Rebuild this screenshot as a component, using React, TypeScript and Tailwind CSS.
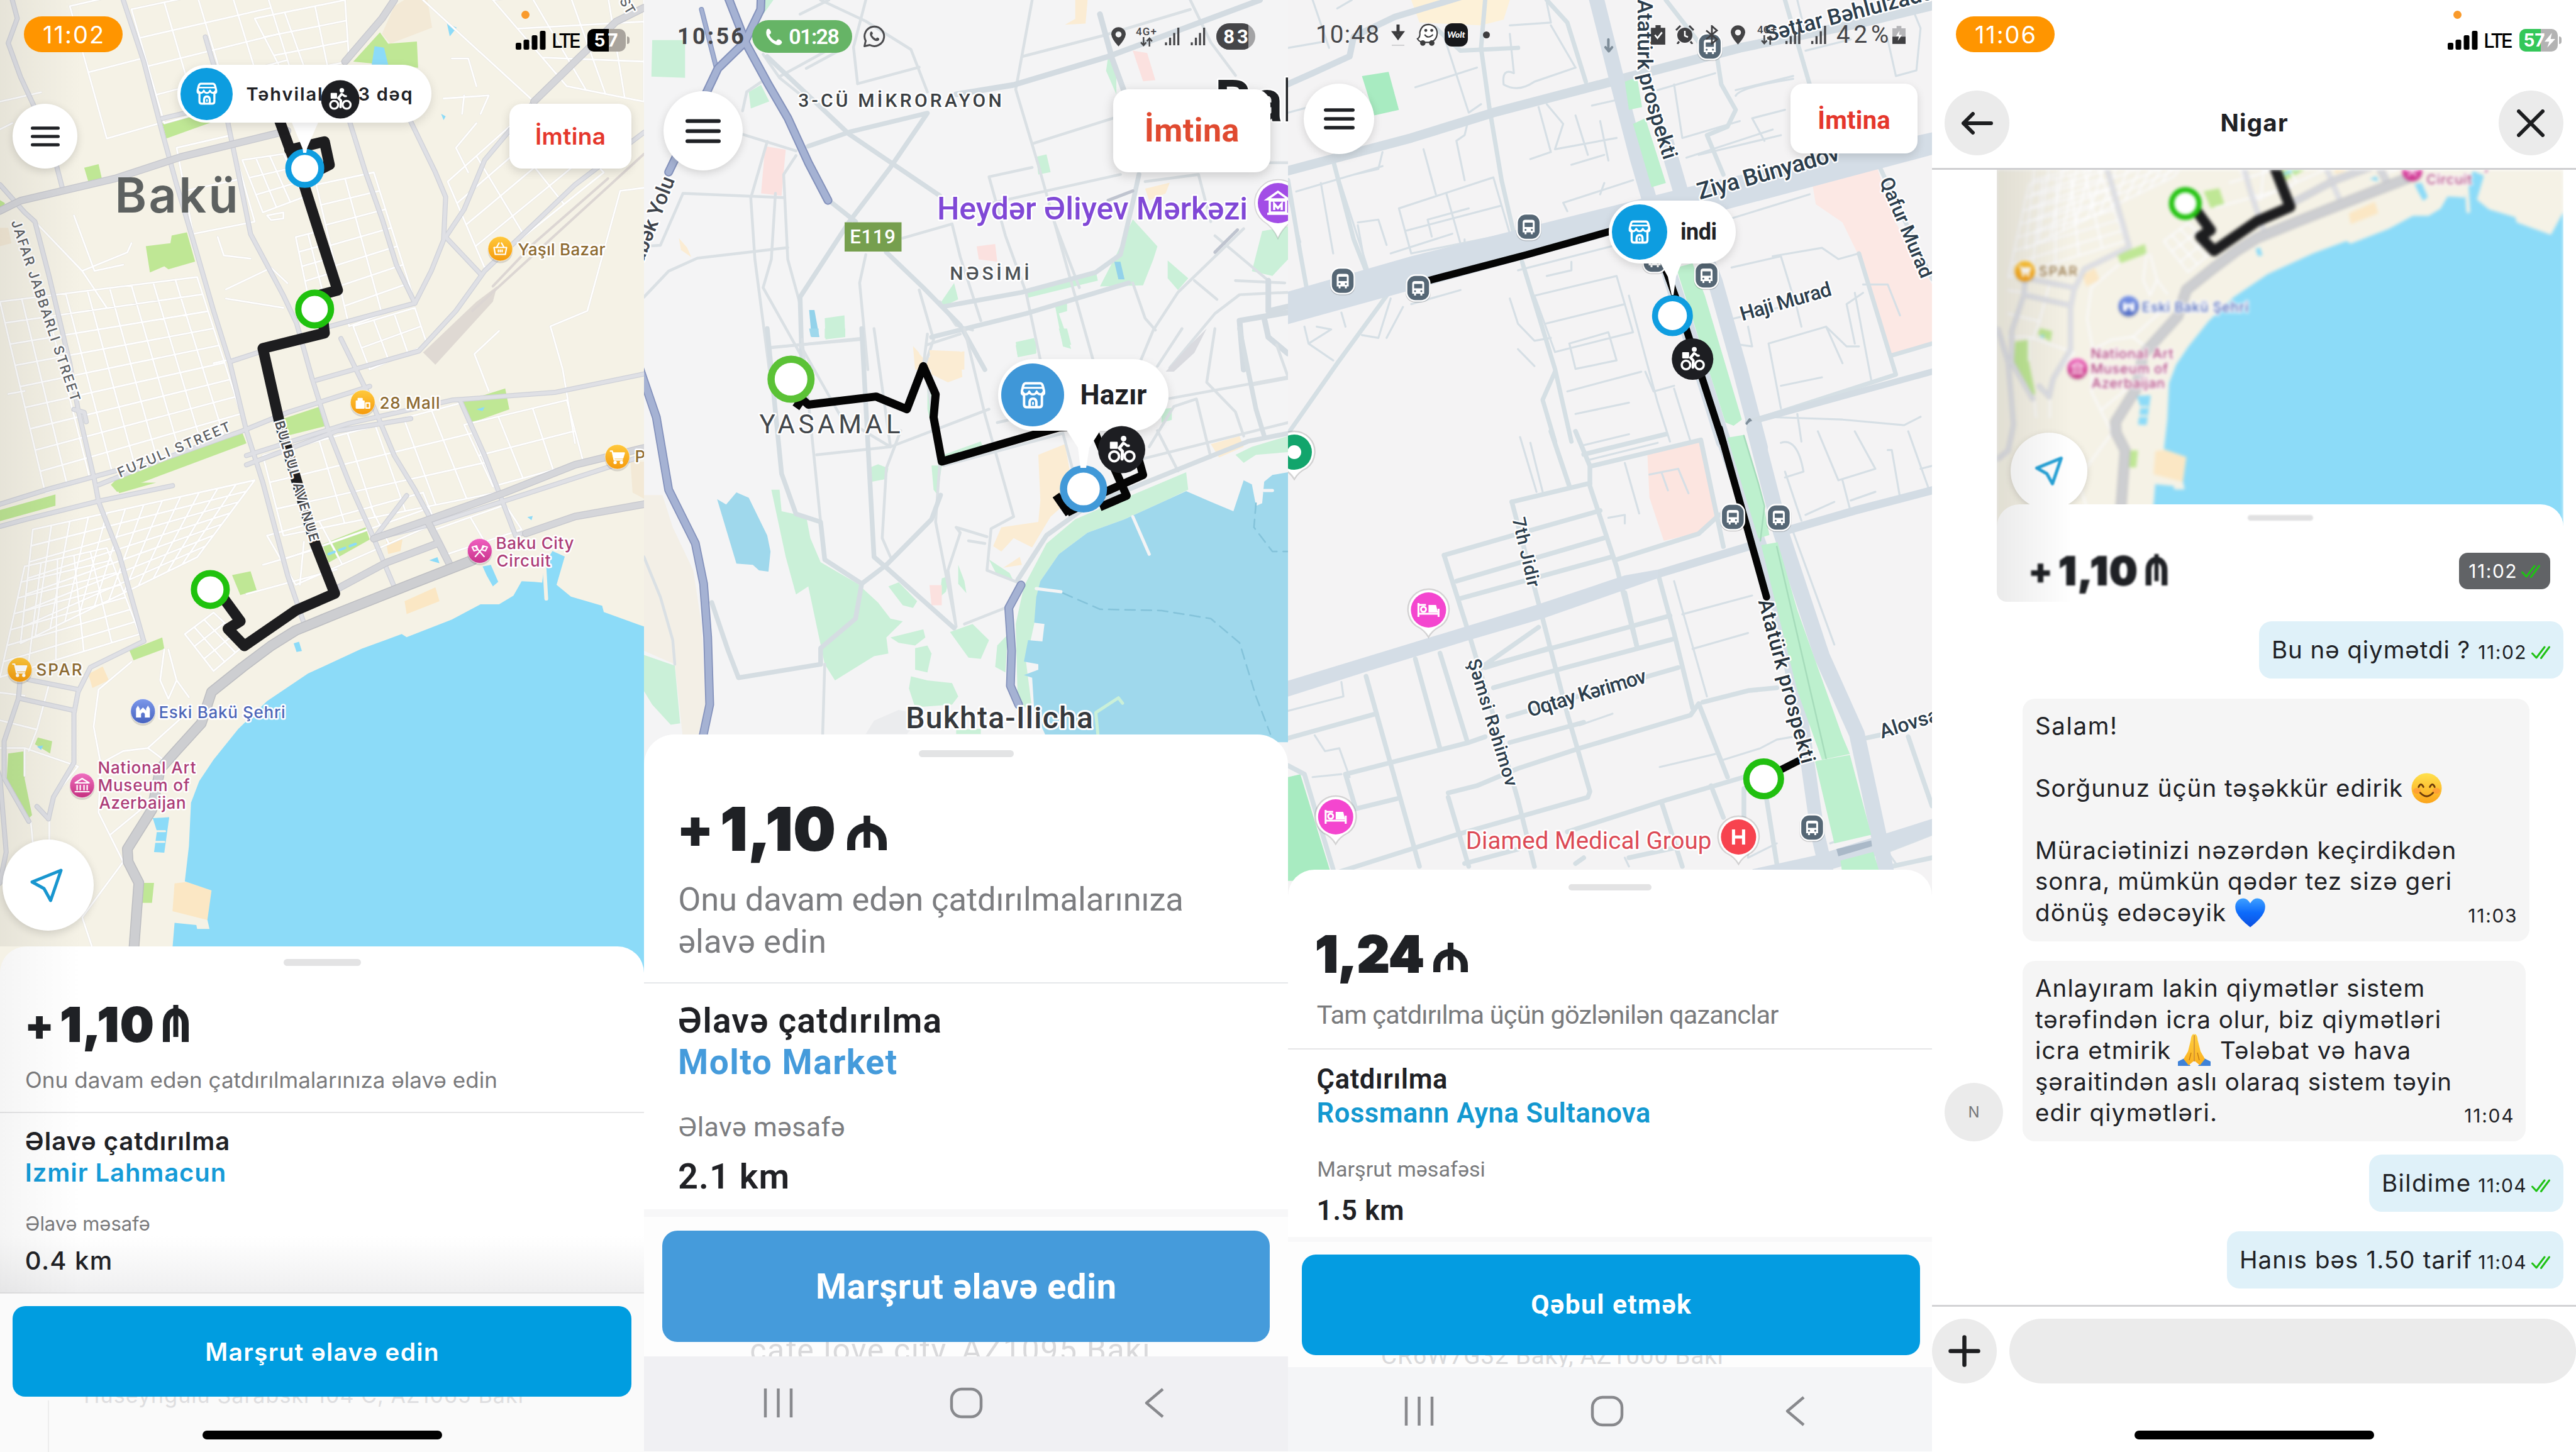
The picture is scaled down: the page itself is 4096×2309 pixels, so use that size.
import { useLayoutEffect, useRef, useState, type ReactNode } from "react";

/* ---------- text helpers ---------- */

/** A single line of text tracked so that its ink fills the given width. */
function Fit({ w, className = "", children }: { w: number; className?: string; children: string }) {
  const ref = useRef<HTMLSpanElement>(null);
  const [fit, setFit] = useState({ tracking: 0, bearing: 0 });
  useLayoutEffect(() => {
    const el = ref.current;
    if (!el) return;
    el.style.letterSpacing = "0px";
    const natural = el.getBoundingClientRect().width;
    const bearing = parseFloat(getComputedStyle(el).fontSize) * 0.055;
    const tracking = (w + bearing * 2 - natural) / Math.max(1, children.length - 1);
    el.style.letterSpacing = `${tracking}px`;
    setFit({ tracking, bearing });
  }, [w, children]);
  return (
    <span className={`inline-block leading-none ${className}`}>
      <span
        ref={ref}
        className="inline-block whitespace-pre"
        style={{ letterSpacing: fit.tracking, marginLeft: -fit.bearing, marginRight: -fit.tracking - fit.bearing }}
      >
        {children}
      </span>
    </span>
  );
}

type LabelProps = {
  x: number;
  y: number;
  w?: number;
  size: number;
  fill: string;
  rot?: number;
  weight?: number;
  halo?: string;
  haloWidth?: number;
  roboto?: boolean;
  anchor?: "start" | "end";
  children: string;
};

function Label({ x, y, w, size, fill, rot = 0, weight = 500, halo = "#ffffff", haloWidth = 5, roboto, anchor = "start", children }: LabelProps) {
  const bearing = size * 0.06;
  return (
    <text
      x={-bearing}
      y={0}
      transform={`translate(${x} ${y}) rotate(${rot})`}
      textLength={w ? w + bearing * 2 : undefined}
      lengthAdjust="spacing"
      fontSize={size}
      fontWeight={weight}
      fill={fill}
      stroke={halo}
      strokeWidth={haloWidth}
      strokeLinejoin="round"
      paintOrder="stroke"
      textAnchor={anchor}
      className={roboto ? "font-['Roboto',sans-serif]" : "font-['Inter',sans-serif] [font-optical-sizing:none]"}
    >
      {children}
    </text>
  );
}

/* ---------- map drawing helpers ---------- */

type Pt = [number, number];

/** Street grid inside a quadrilateral (corners clockwise from top left). */
function mesh(q: [Pt, Pt, Pt, Pt], rows: number, cols: number) {
  const mix = (a: Pt, b: Pt, t: number): Pt => [a[0] + (b[0] - a[0]) * t, a[1] + (b[1] - a[1]) * t];
  const seg = (a: Pt, b: Pt) => `M${a[0].toFixed(0)} ${a[1].toFixed(0)}L${b[0].toFixed(0)} ${b[1].toFixed(0)}`;
  const out: string[] = [];
  for (let i = 0; i <= rows; i++) out.push(seg(mix(q[0], q[3], i / rows), mix(q[1], q[2], i / rows)));
  for (let i = 0; i <= cols; i++) out.push(seg(mix(q[0], q[1], i / cols), mix(q[3], q[2], i / cols)));
  return out.join("");
}

function Tile({ top, sy, children }: { top: number; sy: number; children: ReactNode }) {
  return (
    <g
      transform={`translate(0 ${top}) scale(0.6531 ${sy})`}
      fill="none"
      strokeLinecap="round"
      strokeLinejoin="round"
      className="[&_path]:[vector-effect:non-scaling-stroke] [&_polyline]:[vector-effect:non-scaling-stroke]"
    >
      {children}
    </g>
  );
}

function Lines({ list, c, w, dash }: { list: string[]; c: string; w: number; dash?: string }) {
  return (
    <g stroke={c} strokeWidth={w} strokeDasharray={dash}>
      {list.map((p) => (
        <polyline key={p} points={p} />
      ))}
    </g>
  );
}

function Areas({ list, c }: { list: string[]; c: string }) {
  return (
    <g fill={c}>
      {list.map((p) => (
        <polygon key={p} points={p} />
      ))}
    </g>
  );
}

function Ring({ x, y, r, sw, c }: { x: number; y: number; r: number; sw: number; c: string }) {
  return <circle cx={x} cy={y} r={r - sw / 2} fill="#fff" stroke={c} strokeWidth={sw} />;
}

function Bike({ x, y, r }: { x: number; y: number; r: number }) {
  return (
    <g transform={`translate(${x} ${y}) scale(${r / 30})`}>
      <circle r="30" fill="#1d1e22" />
      <g fill="none" stroke="#fff" strokeWidth="3.2" strokeLinecap="round" strokeLinejoin="round">
        <circle cx="-9.5" cy="8.5" r="6.2" />
        <circle cx="10" cy="8.5" r="6.2" />
        <path d="M2 -8 L-3 -2 L1 2 L0.5 12" strokeWidth="4" />
        <path d="M3 -8 L7 -5 L9 -5" />
      </g>
      <rect x="-15" y="-10" width="10" height="9" rx="1" fill="#fff" />
      <circle cx="2.5" cy="-14" r="3.6" fill="#fff" />
    </g>
  );
}

function StoreIcon({ className }: { className: string }) {
  return (
    <svg viewBox="0 0 40 44" className={className} fill="none" stroke="#fff" strokeWidth="4" strokeLinejoin="round" strokeLinecap="round">
      <path d="M8 2.500H32Q35 3 36 7L38 15V19Q37 21 34.500 21V37Q34.500 41.500 30 41.500H10Q5.500 41.500 5.500 37V21Q3 21 2 19V15L4 7Q5 3 8 2.500Z" />
      <path d="M5 10H35" strokeWidth="3" />
      <path d="M2.500 15.500Q5 21 9 20.500Q12.500 20 14 16Q16 21 20 20.500Q24 21 26 16Q27.500 20 31 20.500Q35 21 37.500 15.500" strokeWidth="3.500" />
      <path d="M14.500 41V33Q15 27.500 20 27.500Q25 27.500 25.500 33V41" />
      <path d="M20 34V36.500" strokeWidth="3" />
    </svg>
  );
}

/** Round map badge used for places of interest. */
function Poi({ x, y, from, to, id, children }: { x: number; y: number; from: string; to: string; id: string; children: ReactNode }) {
  return (
    <g transform={`translate(${x} ${y})`}>
      <defs>
        <linearGradient id={id} x1="0" y1="0" x2="0" y2="1">
          <stop offset="0" stopColor={from} />
          <stop offset="1" stopColor={to} />
        </linearGradient>
      </defs>
      <ellipse cx="0" cy="3" rx="20" ry="20" fill="#000" opacity="0.12" />
      <circle r="19.500" fill={`url(#${id})`} stroke="#fff" strokeOpacity="0.6" strokeWidth="1" />
      <g fill="none" stroke="#fff" strokeWidth="2.200" strokeLinecap="round" strokeLinejoin="round">
        {children}
      </g>
    </g>
  );
}

const Cart = () => (
  <>
    <path d="M-11 -9H-8L-5 5H8" />
    <path d="M-7 -6H11L8.500 2H-5Z" fill="#fff" />
    <circle cx="-3.500" cy="9" r="1.600" fill="#fff" />
    <circle cx="6.500" cy="9" r="1.600" fill="#fff" />
  </>
);

/* ---------- first map ---------- */

const land1 = {
  park: [
    "860,200 925,105 945,142 1015,135 1018,220",
    "395,400 500,370 520,395 405,450",
    "205,545 240,533 248,580 215,590",
    "355,800 415,790 418,765 455,755 475,850 410,875 400,865 365,885",
    "1128,1305 1230,1262 1240,1330 1145,1375",
    "690,1360 780,1320 790,1385 700,1415",
    "270,1575 300,1535 590,1405 600,1440 420,1530 285,1598",
    "0,650 12,660 8,675 0,678",
    "785,1768 890,1713 900,1753 800,1828",
    "565,1868 610,1856 625,1918 585,1933",
    "315,2113 395,2071 400,2108 325,2145",
    "-30,1670 0,1657 135,1606 135,1643 0,1693 -30,1702",
    "280,1568 380,1568 290,1602",
    "20,2448 62,2440 60,2530 78,2648 65,2665 40,2610 16,2540",
    "85,2418 92,2396 127,2408 122,2448",
    "345,2868 375,2868 370,2933 343,2933",
  ],
  sand: ["985,1953 1060,1908 1070,1953 990,1995", "425,2870 455,2865 515,2893 508,2990 420,2960", "215,2190 250,2165 265,2210 225,2235", "940,1760 980,1752 975,1790 945,1800"],
  water: [
    "905,210 912,150 935,155 945,210",
    "1088,75 1112,90 1095,118",
    "1045,1820 1065,1810 1070,1830",
    "1175,1840 1195,1835 1213,1890 1200,1905 1185,1870",
    "715,2090 728,2085 735,2115 722,2118",
    "372,2658 412,2655 400,2770 375,2768 382,2700",
    "1074,370 1085,378 1080,390",
    "1284,1680 1297,1676 1294,1690",
    "1160,1330 1180,1322 1175,1335",
    "90,2425 105,2422 100,2436",
  ],
};

const sea1 =
  "1640,1890 1605,1948 1569,2036 1470,1988 1466,1968 1390,1938 1355,1900 1375,1808 1345,1790 1325,1835 1320,1893 1300,1890 1270,1888 1250,1935 1215,1963 1170,1963 1100,2013 990,2070 978,2060 880,2108 750,2188 650,2278 580,2368 520,2468 485,2538 465,2608 460,2748 450,2863 515,2893 505,2988 510,3018 480,3018 478,3005 425,2998 415,3160 1640,3160";

const main1 = [
  "30,0 42,60 20,140 50,250 95,380 130,500 152,612",
  "300,0 350,200 395,430 430,600 470,780 520,1010 560,1180 600,1400 640,1568 672,1728 700,1868 742,2033",
  "500,120 540,300 555,400 580,560 610,760 690,960 722,1050 760,1230 800,1400 850,1568 900,1718 962,1913",
  "0,600 60,690 85,720 120,900 170,1180 190,1330 230,1560 240,1630 290,1800 350,2083",
  "395,385 520,345 640,300",
  "850,390 890,560 930,710 965,860 1010,985",
  "1000,395 1060,560 1085,640 1080,780 1050,880 1010,985 790,1065",
  "770,1235 1020,1140 1110,1010 1180,880 1400,600 1568,430",
  "1300,330 1180,520 1130,680 1085,770 1170,890",
  "560,1175 640,1140",
  "240,1575 400,1490 590,1400 700,1340 900,1255",
  "600,1480 850,1375 1100,1300 1350,1275 1568,1215",
  "1120,1300 1180,1480 1215,1600 1255,1740 1280,1730",
  "830,1100 900,1290 960,1480 1010,1590 1050,1690",
  "600,1510 820,1400 1000,1360",
  "0,1710 60,1688 240,1628 420,1578",
  "0,1638 120,1588 280,1530",
  "350,2083 220,2168 190,2248 180,2318 180,2478 130,2590 118,2660",
  "50,2190 45,2268 10,2408 10,2528 70,2668",
  "45,2268 180,2308",
  "70,2208 190,2240",
  "-30,2400 0,2528 15,2768 0,2868 -30,2900",
  "90,2620 118,2660",
  "990,1610 910,1750 1060,1700 1568,1480",
  "180,1330 205,1340 210,1370",
];

const wide1 = [
  "-30,700 0,685 50,652 280,580 440,510 700,425",
  "960,0 930,60 840,200",
  "1568,25 1500,70 1300,330",
  "1630,1460 1568,1455 1400,1510 1230,1600 1040,1690 910,1750",
  "1640,1610 1568,1638 1400,1678 1280,1733",
  "1040,1690 1070,1768 1097,1840",
  "1060,1768 940,1828 825,1910",
];

const coast1 = ["1150,1820 1000,1898 830,1988 720,2048 660,2098 590,2168 515,2248 490,2350 430,2438 390,2498 370,2630 310,2758 312,2800 338,2868 325,3100"];

const minor1 = [
  mesh([[0, 980], [480, 900], [600, 1400], [110, 1600]], 9, 9),
  mesh([[80, 1720], [620, 1560], [480, 1810], [50, 2090]], 7, 12),
  mesh([[60, 1840], [260, 1780], [340, 2060], [0, 2200]], 7, 5),
  mesh([[170, 20], [300, -20], [390, 400], [260, 450]], 2, 1),
  mesh([[320, 30], [640, -60], [720, 280], [400, 400]], 4, 4),
  mesh([[430, 480], [560, 440], [620, 720], [470, 760]], 2, 1),
  mesh([[590, 520], [690, 500], [740, 640], [640, 690]], 3, 3),
  mesh([[770, 600], [910, 560], [1010, 980], [850, 1060]], 7, 2),
  mesh([[720, 770], [780, 750], [820, 930], [750, 960]], 4, 2),
  mesh([[620, 60], [840, 0], [850, 200], [690, 240]], 3, 3),
  mesh([[1090, 590], [1300, 340], [1470, 560], [1180, 870]], 4, 3),
  mesh([[1200, 0], [1568, -60], [1568, 330], [1380, 280]], 3, 4),
  mesh([[860, 1060], [1010, 1000], [1040, 1120], [900, 1200]], 2, 3),
  mesh([[640, 1480], [1120, 1310], [1210, 1600], [690, 1740]], 3, 7),
  mesh([[1130, 1380], [1380, 1300], [1420, 1500], [1200, 1580]], 2, 3),
  mesh([[650, 1740], [1030, 1600], [1060, 1700], [720, 1900]], 2, 3),
  mesh([[1060, 1720], [1230, 1640], [1270, 1720], [1090, 1800]], 1, 2),
  mesh([[450, 2060], [520, 1990], [600, 2090], [520, 2180]], 3, 3),
  "M1568 610L1510 620L1430 1010L1340 1060L1370 1200L1400 1440",
  "M85 720L200 880L310 820L320 790M180 700L230 880L300 860M200 880L260 1000",
  "M550 940L660 870L700 920M550 970L690 1000",
  "M640 1835L780 1780M600 1930L820 1850",
  "M530 770L545 830L610 840M520 1180L650 1140",
  "M400 2110L390 2210L410 2270L430 2210L410 2110M430 2210L460 2265",
  "M320 2150L240 2240L228 2360L245 2480L240 2640L300 2800M245 2480L300 2440L360 2430L460 2310M360 2430L410 2480",
  "M60 2430L190 2490L130 2590M0 2250L60 2260M0 2340L90 2370M120 2220L90 2370L70 2440M0 2430L60 2430L60 2520",
  "M270 2710L370 2600M300 2800L200 2980L230 3100M75 2670L80 2740M120 2660L120 2740",
  "M1215 1075L1155 1150L1190 1270M1160 400L1110 480L1140 560M1100 190H1140L1160 280M1080 320L1190 310L1170 370M1130 310L1125 370",
  "M650 700L690 690L690 710L660 715ZM30 400L0 420M0 330L100 300",
  "M20 1280L60 1270M1030 0L1300 330M730 1900L740 1760",
];

function CityMap() {
  return (
    <>
      <rect x="-60" y="0" width="1160" height="1600" fill="#f5f2e6" />
      <Tile top={0} sy={0.4895}>
        <Areas list={["960,20 990,-5 1040,-5 1052,90 950,142 930,110", "0,740 20,740 28,790 0,800", "1535,1500 1568,1500 1568,1620 1540,1600"]} c="#f3e9d6" />
        <Areas list={land1.park} c="#bfe795" />
        <Areas list={land1.sand} c="#fbe7c4" />
        <Areas list={[sea1]} c="#8cdbf8" />
        <Areas list={land1.water} c="#8cdbf8" />
        <g stroke="#e8e6e3" strokeWidth="3.800">
          {minor1.map((d) => (
            <path key={d} d={d} />
          ))}
        </g>
        <g stroke="#ffffff" strokeWidth="2.600">
          {minor1.map((d) => (
            <path key={d} d={d} />
          ))}
        </g>
        <Areas list={["1030,1145 1160,980 1210,930 1200,980 1060,1185"]} c="#dfd9d3" />
        <Lines list={["1200,930 1300,790 1480,580", "1150,1010 1330,790 1568,500"]} c="#dcd6d3" w={4} />
        <Lines list={main1} c="#cfd1d8" w={8} />
        <Lines list={main1} c="#dfe0e5" w={5.500} />
        <Lines list={wide1} c="#c6c7cd" w={12} />
        <Lines list={wide1} c="#d5d6da" w={9.500} />
        <Lines list={coast1} c="#bcbdc1" w={17} />
        <Lines list={coast1} c="#cdced1" w={14} />
        <Lines list={["1325,1830 1330,1945"]} c="#f5f2e6" w={6} />
        <Lines list={["800,1800 870,1765"]} c="#8cdbf8" w={4} dash="10 8" />
        <Lines list={["378,2700 402,2700", "378,2735 400,2735"]} c="#f5f2e6" w={3} />
        <Lines
          list={["680,390 710,500 740,600 822,943 780,958 790,1082 640,1132 680,1370 765,1758 815,1928 720,1983 595,2098 555,2043 585,2018 545,1945", "705,487 790,460 802,535 765,560"]}
          c="#1d1d1f"
          w={17}
        />
      </Tile>
      <Label x={187} y={338} w={187} size={77} weight={600} fill="#5d6160" haloWidth={0}>Bakü</Label>
      <Label x={18} y={354} w={300} size={21.500} rot={71.500} fill="#5b5e63">JAFAR JABBARLI STREET</Label>
      <Label x={192} y={759} w={190} size={21.500} rot={-23} fill="#5b5e63">FUZULI STREET</Label>
      <Label x={437} y={673} w={196} size={21} rot={73.500} weight={600} fill="#4c4f54">BULBUL AVENUE</Label>
      <Label x={985} y={2} size={21} rot={60} fill="#5b5e63">ST</Label>
      <Label x={825} y={406} w={136} size={26} fill="#8d6a30">Yaşıl Bazar</Label>
      <Label x={605} y={650} w={93} size={26} fill="#8d6a30">28 Mall</Label>
      <Label x={1011} y={735} size={26} fill="#8d6a30">P</Label>
      <Label x={59} y={1074} w={70} size={26} fill="#8d6a30">SPAR</Label>
      <Label x={254} y={1142} w={198} size={26} fill="#4d66b8">Eski Bakü Şehri</Label>
      <Label x={157} y={1230} w={153} size={26} fill="#ac3c77">National Art</Label>
      <Label x={157} y={1258} w={143} size={26} fill="#ac3c77">Museum of</Label>
      <Label x={159} y={1286} w={135} size={26} fill="#ac3c77">Azerbaijan</Label>
      <Label x={790} y={873} w={121} size={26} fill="#ac3c77">Baku City</Label>
      <Label x={791} y={901} w={83} size={26} fill="#ac3c77">Circuit</Label>
      <Poi id="poi-y" x={795.500} y={395.500} from="#ffc93c" to="#f59a0c">
        <path d="M-10 -2H10L8 9H-8ZM-6 -2L-2 -9M6 -2L2 -9" />
        <path d="M-3 2V5M0 2V5M3 2V5" />
      </Poi>
      <Poi id="poi-m" x={576.700} y={639.800} from="#ffc93c" to="#f59a0c">
        <path d="M-10 -2H2V9H-10ZM-7 -2V-6H-1V-2" fill="#fff" />
        <path d="M5 1H11V9H5Z" />
      </Poi>
      <Poi id="poi-p" x={981.600} y={726.400} from="#ffc93c" to="#f59a0c"><Cart /></Poi>
      <Poi id="poi-s" x={31.300} y={1065} from="#ffc93c" to="#f59a0c"><Cart /></Poi>
      <Poi id="poi-e" x={227.300} y={1131} from="#7b97ea" to="#4763bf">
        <path d="M-11 10V-4L-8 -9L-5 -4V-1L0 -6L5 -1V-4L8 -9L11 -4V10H3V4Q0 0 -3 4V10Z" fill="#fff" stroke="none" />
      </Poi>
      <Poi id="poi-n" x={130.600} y={1249} from="#ef6fc0" to="#c5307f">
        <path d="M-11 -4L0 -11L11 -4ZM-8 0V7M-3 0V7M3 0V7M8 0V7M-11 10H11" />
      </Poi>
      <Poi id="poi-c" x={762.800} y={876} from="#f05fc0" to="#c9338b">
        <path d="M-7 9L7 -7M7 9L-7 -7M-12 -6L-5 -8L-3 -2L-9 0ZM12 -6L5 -8L3 -2L9 0Z" />
      </Poi>
      <Ring x={500.300} y={491.500} r={31} sw={10} c="#20c20e" />
      <Ring x={334.400} y={937.400} r={31} sw={10} c="#20c20e" />
    </>
  );
}

/* ---------- second map ---------- */

const roads2a = [
  "400,620 500,560 690,480 600,710 500,940 380,1260 385,1568",
  "300,240 500,570 720,830",
  "450,850 515,940",
  "590,1070 680,1220 770,1380 830,1568",
  "700,1430 930,1330 1180,1200",
  "1205,740 1190,860 1160,1080 1100,1155 920,1240 730,1300",
];
const thin2a = [
  "540,1080 525,1200 545,1568", "0,1260 60,1150 130,1095 350,1050", "300,600 260,840 270,1100 305,1568", "370,660 340,740 350,1100 380,1290",
  "340,838 95,820 40,1040 0,1045", "310,1475 530,1435", "240,570 370,640", "330,325 450,210", "290,230 330,330 380,400", "945,0 905,380 960,700 1100,1568",
  "920,240 1120,150 1330,40", "1330,0 1380,180 1440,320", "945,710 840,750 880,1000 930,1240 970,1568", "945,610 1145,500", "850,860 1160,740",
  "630,1010 750,950 770,1090 820,1360", "1190,1200 1220,1350 1245,1400", "1460,970 1300,1240 1240,1400 1200,1568", "1390,1000 1520,1190",
  "670,1230 705,1440 680,1568", "690,390 650,210 540,90 430,0", "520,355 670,285", "520,355 510,200 540,0", "1220,770 1350,740 1380,940",
  "240,470 250,390 300,330", "380,60 450,0", "395,290 480,210", "1280,1560 1390,1330 1450,1250 1568,1240", "1340,1190 1395,1270", "1440,1190 1560,1200",
  "720,1280 760,1380 800,1400", "1500,690 1568,690", "990,900 1060,1220", "320,820 310,1100 290,1220 380,1500",
];
const roads2b = [
  "300,0 335,540 370,690 430,720 440,860 530,950 515,1080 430,1190 430,1250",
  "430,1250 230,1300 205,1200 165,1020",
  "530,0 560,850 590,890 755,1115",
  "530,950 590,880 700,710 722,620",
  "1080,660 1340,500 1470,420 1568,390",
  "1080,660 980,770 910,935",
  "1450,0 1490,300 1510,400",
];
const thin2b = [
  "305,70 530,40", "385,40 430,720", "690,200 720,500 710,720 760,1110 740,900 770,760 760,740 835,775", "780,0 830,320 900,700 845,745 835,900 910,945",
  "420,470 600,440 840,300", "625,380 590,520 580,780 600,850", "560,0 600,440", "730,510 1020,390 1050,560", "1200,490 1568,350", "1230,440 1290,290 1345,262 1380,480",
  "1310,0 1250,140", "1250,380 1300,530", "1280,260 1568,180", "440,1250 435,1510", "0,850 40,1000 70,1160 75,1250", "790,790 830,800", "860,350 1000,300",
  "780,1100 880,1040", "380,60 480,330 600,440", "1390,0 1370,200 1440,310 1460,400", "1480,210 1568,185", "1540,60 1568,180", "690,20 680,140", "690,60 770,20",
];

function GulfMap() {
  return (
    <svg width="1024" height="1220" viewBox="0 0 1024 1220" className="absolute left-0 top-0">
      <rect width="1024" height="1220" fill="#f4f4f5" />
      <Tile top={0} sy={0.3749}>
        <Areas
          list={[
            "20,170 100,170 100,330 18,325", "255,390 285,360 305,430 260,460", "1190,930 1250,1045 1240,1100 1215,1210 1110,1215 1150,1080",
            "930,1230 1100,1150 1105,1190 930,1265", "1275,1105 1325,1180 1300,1230 1275,1180", "1505,980 1568,960 1568,1100 1530,1170 1480,1150",
            "440,1350 488,1338 490,1430 442,1440", "955,665 980,655 990,730 960,740", "720,1290 755,1200 765,1270 735,1295", "905,1465 955,1445 955,1500 910,1515",
            "1000,1290 1030,1270 1030,1320 1010,1330 1040,1480 1020,1470", "290,0 315,0 270,110 285,50", "1130,240 1150,300 1150,400 1125,300",
          ]}
          c="#caf0d8"
        />
        <Areas list={["295,620 345,635 335,830 285,820", "1190,215 1225,225 1245,340 1215,345", "810,1045 855,1035 860,1110 815,1100"]} c="#fbe1df" />
        <Areas list={["655,1470 680,1520 780,1490 780,1568 660,1568", "1050,0 1080,0 1075,100 1025,105 1050,80", "1220,800 1280,775 1270,820 1230,850", "85,1010 105,1050 115,1090 90,1060"]} c="#fbecd3" />
        <Areas list={["402,1315 415,1315 427,1430 408,1430", "1145,1110 1160,1110 1170,1185 1155,1185"]} c="#93d2ea" />
        <Lines list={thin2a} c="#dae0e4" w={4.500} />
        <Lines list={roads2a} c="#d5dde2" w={7.500} />
        <Lines list={["760,400 900,360 1130,240 1500,0", "1110,60 1140,250 1180,440", "1568,1300 1520,1320 1520,1190", "1568,1325 1450,1360 1460,1568", "1510,1350 1520,1430 1568,1500"]} c="#d3dbe1" w={9} />
        <Lines list={["140,40 175,280"]} c="#8a99c2" w={8} />
        <Lines list={["140,40 175,280"]} c="#a5b2d3" w={5} />
        <Lines list={["205,-10 250,190 300,350 350,500 400,690 448,850", "285,-10 284,40 245,180 180,290 150,400", "85,640 60,730"]} c="#8391bb" w={14} />
        <Lines list={["205,-10 250,190 300,350 350,500 400,690 448,850", "285,-10 284,40 245,180 180,290 150,400", "85,640 60,730"]} c="#a5b2d3" w={10} />
        <Lines list={["1445,975 1390,1070", "1130,850 1190,810"]} c="#bfc4cf" w={5} />
      </Tile>
      <Tile top={522.6} sy={0.427}>
        <Areas list={["0,620 45,620 70,740 120,900 140,1100 150,1400 130,1530 95,1530 75,1250 0,1200"]} c="#f3efe6" />
        <Areas
          list={[
            "310,600 330,600 335,680 395,700 405,780 430,870 520,950 570,1020 600,1080 630,1090 590,1150 595,1210 560,1220 465,1310 440,1250 400,960 370,990 345,850",
            "650,1295 690,1310 750,1320 765,1370 750,1400 660,1410 645,1340", "745,1130 800,1100 840,1160 820,1230 790,1225", "660,1190 690,1180 700,1210 690,1280 660,1270",
            "595,960 620,945 665,1015 655,1040 630,1030", "0,1215 75,1255 88,1470 65,1475 20,1400 0,1350", "600,1150 680,1120 685,1150 660,1180 620,1170",
            "1320,535 1325,600 1270,640 1170,710 1080,760 1010,840 965,940 950,1100 930,1240 945,1420 910,1400 905,1100 925,960 980,800 1050,710 1110,670",
            "1440,470 1480,440 1568,400 1568,460 1490,470 1460,500", "545,520 570,505 595,520 590,560 555,570", "690,230 712,240 720,500 690,300", "730,470 820,420 825,440 735,500",
            "765,880 780,940 785,985 765,950", "840,860 890,910 900,940 860,920", "700,510 725,510 715,620 705,600", "860,1180 885,1140 880,1280 855,1260", "725,930 745,920 735,980 720,1000",
            "905,50 950,35 955,90 910,105", "1010,0 1030,0 1040,60 1020,60", "1260,300 1285,295 1285,340 1260,350", "440,0 490,0 490,30 440,35", "760,1495 820,1490 820,1510 760,1510",
          ]}
          c="#caf0d8"
        />
        <Areas list={["1025,430 960,470 965,640 960,720 870,740 850,810 870,830 900,780 945,815 990,700 1050,620 1040,560", "695,80 770,85 775,180 740,200 700,170", "655,65 670,90 665,120", "1380,430 1450,400 1460,440 1400,480", "875,890 915,850 920,880"]} c="#fbecd3" />
        <Areas list={["695,955 725,955 725,1030 700,1030"]} c="#fbe1df" />
        <Areas list={["540,1510 560,1460 620,1420 680,1440 640,1510"]} c="#ebecee" />
        <Areas
          list={[
            "178,635 200,655 225,610 255,630 300,770 308,830 303,905 280,900 265,880 225,875",
            "1568,535 1530,545 1510,570 1505,650 1490,660 1480,580 1460,565 1435,680 1380,645 1320,605 1270,640 1170,710 1080,760 1010,840 965,940 955,1000 950,1095 975,1100 970,1165 935,1160 925,1240 960,1250 960,1270 925,1290 945,1300 950,1420 985,1540 1568,1540",
            "402,0 425,0 425,30 406,30",
          ]}
          c="#9fd8ec"
        />
        <Lines list={["1190,700 1230,840", "955,968 1015,980", "1510,603 1530,603"]} c="#f4f4f5" w={5} />
        <Lines list={["1105,1510 1100,1430 1155,1375 1165,1395"]} c="#caf0d8" w={5} />
        <Lines list={["1020,985 1110,1045 1260,1050 1380,1080 1450,1170 1490,1370 1525,1510", "1490,650 1485,740 1530,830 1568,830"]} c="#84c3da" w={2.500} dash="16 10" />
        <Lines list={thin2b} c="#dae0e4" w={4.500} />
        <Lines list={roads2b} c="#d5dde2" w={7.500} />
        <Areas list={["1270,160 1330,60 1370,0 1340,90 1290,160"]} c="#d9dadf" />
        <Lines list={["-10,150 30,330 60,600 125,800 145,950 155,1150 160,1400 142,1530", "918,955 888,1040 895,1200 892,1330 912,1400"]} c="#8391bb" w={14} />
        <Lines list={["-10,150 30,330 60,600 125,800 145,950 155,1150 160,1400 142,1530", "918,955 888,1040 895,1200 892,1330 912,1400"]} c="#a5b2d3" w={10.500} />
        <g stroke="#050505" strokeWidth="13" strokeLinecap="butt">
          <polyline points="370,295 385,262 400,283 565,253 640,300 680,140 710,245 705,330 725,495 870,430 1010,368 1090,360 1115,450" />
          <polyline points="1145,520 1175,622 1110,665" />
          <polyline points="1205,490 1215,545 1120,610" />
          <polyline points="1003,620 1035,690" />
          <polyline points="1030,685 1070,655" />
        </g>
      </Tile>
      <Label roboto x={247} y={170} w={320} size={30} fill="#3a3e42" weight={500}>3-CÜ MİKRORAYON</Label>
      <Label roboto x={913} y={193} size={92} weight={700} fill="#1f2124">Bakı</Label>
      <Label roboto x={469} y={349} w={488} size={50} fill="#8048d6">Heydər Əliyev Mərkəzi</Label>
      <g transform="translate(1008 323)">
        <path d="M0 56Q-8 38 -24 28A37 37 0 1 1 24 28Q8 38 0 56Z" fill="#fff" stroke="#0002" strokeWidth="2" />
        <circle r="32" fill="#a24de6" />
        <path d="M-17 -6L0 -18L17 -6ZM-13 -4H13V15H-13ZM-17 17H17" fill="none" stroke="#fff" strokeWidth="3.500" />
        <path d="M-6 11V1L0 8L6 1V11" fill="none" stroke="#fff" strokeWidth="3.500" />
      </g>
      <rect x="319" y="353.500" width="90.500" height="46.500" fill="#769f4e" />
      <Label roboto x={329} y={387} w={69} size={31} fill="#fff" halo="#769f4e" haloWidth={0}>E119</Label>
      <Label roboto x={488} y={444.500} w={123} size={30} fill="#4c5155">NƏSİMİ</Label>
      <Label roboto x={50} y={284} size={33} rot={-69} anchor="end" fill="#3e434b">Babək Yolu</Label>
      <Label roboto x={186} y={689} w={219} size={42} weight={400} fill="#43474b">YASAMAL</Label>
      <Label roboto x={419} y={1158} w={292} size={48} fill="#36393d" haloWidth={6}>Bukhta-Ilicha</Label>
      <Ring x={233.800} y={603} r={37.500} sw={11.500} c="#5bc236" />
    </svg>
  );
}

/* ---------- third map ---------- */

const thin3a = [
  mesh([[270, 740], [500, 630], [540, 830], [300, 900]], 2, 2),
  mesh([[600, 1050], [800, 980], [840, 1180], [650, 1250]], 2, 1),
  mesh([[685, 1220], [780, 1180], [800, 1280], [700, 1310]], 1, 1),
  "M60 0L100 170M120 30L155 0M0 170L80 150M0 400L180 330M110 570L200 980M0 690L30 860M20 680L230 590M80 650L110 900M230 540L220 600L160 620",
  "M380 130L440 400L470 370M310 310L460 240M330 530L360 690M440 420L430 480L410 500L430 640M540 120L550 260Q520 240 525 300Q560 330 600 290L700 240",
  "M630 10L640 80L540 90M640 90L700 240M610 380L640 540L590 565M630 370L670 440L650 530M700 410L730 550M760 430L780 570M650 530L800 490M690 585L770 550M740 375L800 355",
  "M680 750L670 720L840 640M760 690L770 650M340 780L440 740M340 780L350 840M170 790L220 780L240 870M170 800L190 960",
  "M940 300L960 490L1100 430M900 320L1040 260M970 560L1180 460M1000 550L1200 480M1090 320L1230 270M1130 420L1210 390M1130 420L1160 500M1090 340Q1100 310 1230 280",
  "M1070 780L1270 690M1070 700L1260 620M1180 910L1300 880L1340 920L1390 900M1080 950L1200 910L1240 1100L1250 1160M1060 1140L1230 1080M1120 1160L1130 1230L1080 1220",
  "M1400 1040L1360 1080L1380 1220M1170 1220L1310 1160L1360 1230L1390 1230M1170 1220L1200 1450M1310 1160L1350 1290M1400 1010L1460 1010L1490 1120M1200 1370L1300 1340",
  "M1380 1040L1420 1350M1240 0L1260 120L1440 60M1480 270L1530 250L1540 100L1520 30M1460 140L1480 270M1260 180L1370 140",
  "M540 1060L560 1150L600 1210L640 1200M680 1390L860 1320M700 1470L830 1430M870 1320L890 1390L940 1370M830 1050L900 1430L930 1568M560 960L800 870M690 930V960L630 980",
  "M250 1060L220 1200L180 1190M280 1090L240 1200M40 1160L50 1220L105 1170L70 1160M50 1220L110 1280M130 1110L140 1160M300 1080L420 1030",
  "M940 1380L980 1568M1150 1480L1350 1490L1500 1510L1540 1480M1240 1470L1250 1568M250 900L400 830M430 850V880M560 1240L600 1300",
];
const mid3a = [
  "480,0 470,170 490,380 520,640 550,830", "110,570 160,850 195,980", "240,1050 120,1290 0,1540", "570,930 650,1310 690,1568", "650,1320 620,1420 650,1568",
  "1040,160 1055,300 1090,390 1070,450 1020,480 1060,620", "630,0 680,80 725,290", "1210,0 1270,300", "920,0 1000,150", "0,640 30,900 45,1020", "1390,900 1480,1330 1120,1500",
  "860,40 880,110", "360,100 420,180 560,170", "1430,560 1568,990", "1568,1220 1470,1262",
];
const mid3b = [
  "545,245 735,180", "545,245 620,650 680,980 735,1250 730,1270 410,1400 100,1540", "380,430 550,360 760,275", "380,430 440,700 520,1080 560,1280 600,1510", "410,520 770,370", "420,580 790,435",
  "700,0 735,120 735,190 800,470 850,750", "740,120 1005,30 1060,400", "720,80 920,10", "640,0 685,190", "800,445 1000,355 1050,290", "610,680 470,820 930,640", "480,820 640,750",
  "500,890 650,830 940,720", "900,490 940,700 985,960", "535,990 950,820", "540,1080 720,1010", "1010,940 1120,900 1190,890", "190,850 320,1510", "310,790 370,1100", "370,770 435,1070",
  "0,1065 215,980", "140,1190 440,1080 480,1060", "390,1255 460,1230 560,1170 710,1100 980,985 1000,945 1070,1200", "140,1190 165,1310 265,1275", "680,1390 920,1280 1110,1200",
  "430,1500 560,1450", "910,1290 960,1510", "0,1160 40,1190 110,1520", "820,560 850,750", "1030,1230 1060,1340", "1160,1230 1190,1500", "1390,1070 1470,1045", "1510,1060 1568,1300",
  "1568,200 1200,350", "390,1270 440,1510", "1110,1240 1110,1340", "830,1480 960,1440", "700,1500 720,1480", "1470,1510 1568,1480",
];
const thin3b = [
  "M565 20L605 210M590 40L620 210M715 50L830 10M730 100L900 40M820 110L855 285M780 300L820 290V320M880 150L950 130L975 215M910 145L925 205M940 520L1020 920M960 635L1130 570",
  "M985 755L1120 700M0 970L135 920L130 870M65 1055L90 1110L125 1100L150 1200M60 1200L130 1190M710 1020L790 980M905 1165L1040 1120M1060 1140L1150 1100L1190 1070L1230 1060",
  "M1230 350L1330 740M1200 40Q1240 20 1255 140L1210 160M1290 0L1340 170L1430 130L1380 0M1350 170L1370 280M1260 290L1330 245M1370 240L1430 210M1460 65H1470L1490 230M1510 0L1560 200M1540 130L1568 120M1210 140L1250 310",
  "M1480 1500L1460 1460L1568 1400M1320 1430L1370 1405M820 1480L830 1510M1120 1400V1480L1190 1430",
];

function Transit({ x, y }: { x: number; y: number }) {
  return (
    <g transform={`translate(${x} ${y})`}>
      <rect x="-20" y="-21" width="40" height="44" rx="15" fill="#0003" />
      <rect x="-18.500" y="-20.500" width="37" height="41" rx="14" fill="#566775" stroke="#fff" strokeWidth="2.500" />
      <path d="M-9.500 -7Q-9.500 -11 -5 -11H5Q9.500 -11 9.500 -7V9H6.500V12H3.500V9H-3.500V12H-6.500V9H-9.500Z" fill="#fff" />
      <rect x="-6.500" y="-6.500" width="13" height="7" fill="#566775" />
      <circle cx="-5" cy="5" r="1.600" fill="#566775" />
      <circle cx="5" cy="5" r="1.600" fill="#566775" />
    </g>
  );
}

function Pin({ x, y, c, children }: { x: number; y: number; c: string; children: ReactNode }) {
  return (
    <g transform={`translate(${x} ${y})`}>
      <path d="M0 43Q-6 32 -20 25A32.500 32.500 0 1 1 20 25Q6 32 0 43Z" fill="#fff" stroke="#00000026" strokeWidth="2.500" />
      <circle r="28" fill={c} />
      {children}
    </g>
  );
}

const Bed = () => (
  <g fill="none" stroke="#fff" strokeWidth="3">
    <path d="M-16 -11V11M-16 6H16V11M-16 -8H-4M16 6V-2" />
    <circle cx="-8" cy="-1" r="4" />
    <path d="M0 -8H12L15 4H0Z" fill="#fff" stroke="none" />
  </g>
);

function AvenueMap() {
  const ink = "#2b3d4c";
  return (
    <svg width="1024" height="1430" viewBox="0 0 1024 1430" className="absolute left-0 top-0">
      <rect width="1024" height="1430" fill="#f4f3f4" />
      <Tile top={0} sy={0.4478}>
        <Areas list={["300,0 540,0 525,70 470,90 320,80"]} c="#fdf1d8" />
        <Areas list={["1275,640 1430,575 1475,780 1568,1010 1568,1215 1470,1260 1400,940 1350,790 1285,725"]} c="#fce8e4" />
        <Areas list={["180,270 245,255 270,390 210,410"]} c="#a8ebc1" />
        <g stroke="#d6dfe5" strokeWidth="3.200">
          {thin3a.map((d) => (
            <path key={d} d={d} />
          ))}
        </g>
        <Lines list={mid3a} c="#d5dfe4" w={7} />
        <Lines list={["-10,610 300,490 500,400 800,285 1100,170 1400,80 1568,20"]} c="#d3dce3" w={15} />
        <Lines list={["-10,305 60,260 150,200 160,130 260,60 420,-10"]} c="#d3dce3" w={10} />
        <Lines list={["750,-10 800,280 850,560 890,760 930,980 1000,1290 1060,1568"]} c="#d4dde6" w={24} />
        <Lines list={["920,500 960,700 1040,1000 1100,1310 1150,1590"]} c="#d4dde6" w={24} />
        <Lines list={["1120,1500 1568,1320"]} c="#d3dce3" w={10} />
        <Areas list={["-10,1040 300,910 780,735 1000,655 1568,470 1568,550 1000,770 800,830 300,1030 -10,1155"]} c="#d4dde6" />
        <Areas list={["820,290 850,275 862,380 830,390", "840,440 870,420 920,650 885,665", "945,950 985,935 1015,1050 1105,1490 1085,1512 1065,1500"]} c="#bdf0ce" />
        <path d="M780 140V175M773 168L781 182L789 168" stroke="#7e8d99" strokeWidth="4" />
        <path d="M1124 1530V1495M1117 1504L1124 1490L1131 1504" stroke="#7e8d99" strokeWidth="4" />
      </Tile>
      <Tile top={685.9} sy={0.4582}>
        <Areas list={["875,80 1000,35 1045,285 1005,350 915,380 880,230"]} c="#fce5e0" />
        <Areas list={["0,1200 30,1190 110,1560 0,1560"]} c="#a8ebc1" />
        <g stroke="#d6dfe5" strokeWidth="3.200">
          {thin3b.map((d) => (
            <path key={d} d={d} />
          ))}
        </g>
        <Lines list={mid3b} c="#d5dfe4" w={7.500} />
        <Lines list={["-10,900 200,810 430,700 600,620 900,495 1120,400", "1568,205 1380,275 1200,350"]} c="#d3dce4" w={13} />
        <Areas list={["-10,870 300,735 600,605 820,500 900,480 900,510 820,550 620,650 440,725 200,830 -10,925"]} c="#d4dde6" />
        <Lines list={["1050,-10 1150,400 1200,640 1250,1000 1290,1400 1320,1580"]} c="#d4dde6" w={22} />
        <Lines list={["1135,-10 1200,350 1300,780 1385,1050 1450,1480 1460,1560"]} c="#d4dde6" w={25} />
        <Areas list={["1130,1520 1290,1470 1568,1345 1568,1400 1440,1470 1300,1530 1180,1560"]} c="#d4dde6" />
        <Areas list={["1070,22 1110,12 1150,200 1172,360 1145,372", "1152,395 1192,385 1240,620 1350,1060 1368,1120 1300,1140 1240,900", "1283,1145 1368,1123 1420,1400 1330,1430", "1345,1490 1425,1460 1440,1530 1350,1540"]} c="#bdf0ce" />
        <Areas list={["1335,1450 1420,1420 1422,1440 1340,1475"]} c="#aab9c8" />
        <path d="M1190 400L1310 1135M1110 15L1145 180L1160 260L1150 380" stroke="#a6dcbb" strokeWidth="2.500" />
        <g stroke="#050505" strokeWidth="11.500">
          <polyline points="1050,-10 1165,575" />
          <polyline points="1190,1182 1245,1142" />
        </g>
      </Tile>
      <Tile top={0} sy={0.4478}>
        <g stroke="#050505" strokeWidth="11.500" strokeLinecap="butt">
          <polyline points="340,997 580,905 800,815" />
          <polyline points="915,940 950,1080 1060,1575" />
        </g>
      </Tile>
      <Transit x={382.700} y={360.500} />
      <Transit x={87} y={446.500} />
      <Transit x={207} y={458} />
      <Transit x={670.700} y={74} />
      <Transit x={665.500} y={438} />
      <Transit x={583} y={413} />
      <Transit x={707.300} y={822} />
      <Transit x={780.400} y={823} />
      <Transit x={833.400} y={1316} />
      <path id="av-top" d="M556 -1L556 112Q566 160 612 300" fill="none" />
      <text fontSize="34" fontWeight="500" fill={ink} stroke="#fff" strokeWidth="5" paintOrder="stroke" strokeLinejoin="round" className="font-['Roboto',sans-serif]">
        <textPath href="#av-top">Atatürk prospekti</textPath>
      </text>
      <Label roboto x={764} y={66} w={270} size={35} rot={-14.500} fill={ink}>Səttar Bəhlulzadə</Label>
      <Label roboto x={657} y={317} w={229} size={37} rot={-15.800} fill={ink}>Ziya Bünyadov</Label>
      <Label roboto x={941} y={289} w={167} size={31} rot={67} fill={ink}>Qafur Murad</Label>
      <Label roboto x={724} y={510} w={146} size={32} rot={-16} fill={ink}>Haji Murad</Label>
      <Label roboto x={357} y={827} w={109} size={29} rot={77} fill={ink}>7th Jidir</Label>
      <Label roboto x={286} y={1053} w={207} size={29} rot={73} fill={ink}>Şəmsi Rəhimov</Label>
      <Label roboto x={386} y={1140} w={192} size={32.500} rot={-16.500} fill={ink}>Oqtay Kərimov</Label>
      <Label roboto x={748} y={958} w={265} size={33} rot={75} fill="#26323c">Atatürk prospekti</Label>
      <Label roboto x={946} y={1174} size={32} rot={-17} fill={ink}>Alovsat</Label>
      <Label roboto x={285} y={1350} w={386} size={38.500} weight={400} fill="#dc4a55">Diamed Medical Group</Label>
      <Pin x={716.400} y={1331} c="#f7434f">
        <path d="M-8 -12V12M8 -12V12M-8 0H8" stroke="#fff" strokeWidth="5" />
      </Pin>
      <Pin x={223.400} y={970} c="#f446cf"><Bed /></Pin>
      <Pin x={75.800} y={1299} c="#f446cf"><Bed /></Pin>
      <Pin x={10} y={719} c="#12a56c">
        <circle r="11" fill="#fff" />
      </Pin>
      <Ring x={756.300} y={1238.500} r={32.500} sw={10} c="#21bf10" />
    </svg>
  );
}

/* ---------- shared phone parts ---------- */

function Manat({ className, tall }: { className: string; tall?: boolean }) {
  return tall ? (
    <svg viewBox="0 0 41 59" className={className} fill="none" stroke="#1f2125">
      <path d="M5.500 59V30C5.500 4 35.500 4 35.500 30V59" strokeWidth="11" />
      <path d="M20.500 0V51" strokeWidth="8" />
    </svg>
  ) : (
    <svg viewBox="0 0 63 55" className={className} fill="none" stroke="#1f2125" preserveAspectRatio="none">
      <path d="M6.500 55V43C6.500 10 56.500 10 56.500 43V55" strokeWidth="13" />
      <path d="M31.500 0V51" strokeWidth="10.500" />
    </svg>
  );
}

function Burger({ className, lines }: { className: string; lines: string }) {
  return (
    <button className={`absolute flex items-center justify-center rounded-full bg-white shadow-[0_4px_14px_rgba(0,0,0,0.14)] ${className}`}>
      <svg viewBox="0 0 46 32" className={lines} stroke="#1f2125" strokeWidth="5" strokeLinecap="round">
        <path d="M2.500 2.800H43.500M2.500 16H43.500M2.500 29.200H43.500" />
      </svg>
    </button>
  );
}

function Bars({ className, c = "#000", thin }: { className: string; c?: string; thin?: boolean }) {
  return thin ? (
    <svg viewBox="0 0 26 30" className={className} fill={c}>
      <rect x="0" y="25" width="3.500" height="5" />
      <rect x="7" y="17" width="3.500" height="13" />
      <rect x="14" y="9" width="3.500" height="21" />
      <rect x="21" y="0" width="3.500" height="30" />
    </svg>
  ) : (
    <svg viewBox="0 0 48 30" className={className} fill={c}>
      <rect x="0" y="19" width="9" height="11" rx="2.500" />
      <rect x="12.500" y="14" width="9" height="16" rx="2.500" />
      <rect x="25.500" y="7" width="9" height="23" rx="2.500" />
      <rect x="38.500" y="0" width="9" height="30" rx="2.500" />
    </svg>
  );
}

function AppleStatus({ time, charging }: { time: string; charging?: boolean }) {
  return (
    <div className="absolute inset-x-0 top-0 h-[100px]">
      <div className="absolute left-[38px] top-[26px] flex h-[57px] w-[157px] items-center justify-center rounded-full bg-[#ff9500] text-[38px] text-white">
        <Fit w={93}>{time}</Fit>
      </div>
      <div className="absolute left-[829px] top-[17px] size-[13px] rounded-full bg-[#f99a2b]" />
      <div className="absolute left-[820px] top-[46px] flex h-[36px] items-center">
        <Bars className="h-[30px] w-[48px]" />
        <Fit w={43} className="ml-[11px] text-[31px] font-medium text-black">LTE</Fit>
        <div className={`relative ml-[12px] flex h-[36px] w-[61px] items-center overflow-hidden rounded-[10px] ${charging ? "bg-[#b3b3b3]" : "bg-[#a9a49d]"}`}>
          <div className={`absolute inset-y-0 left-0 w-[34px] ${charging ? "bg-[#34c759]" : "bg-black"}`} />
          <Fit w={charging ? 31 : 35} className={`relative text-[28px] font-bold text-white ${charging ? "ml-[8px]" : "ml-[12px]"}`}>57</Fit>
          {charging && (
            <svg viewBox="0 0 16 22" className="relative ml-[1px] h-[24px] w-[17px]" fill="#fff">
              <path d="M11 0L0 13H7L4 22L16 9H9Z" />
            </svg>
          )}
        </div>
        <div className={`ml-[2px] h-[12px] w-[4px] rounded-r-full ${charging ? "bg-[#b3b3b3]" : "bg-[#a9a49d]"}`} />
      </div>
    </div>
  );
}

function PlaceGlyph({ className }: { className: string }) {
  return (
    <svg viewBox="0 0 24 32" className={className} fill="#434345">
      <path fillRule="evenodd" d="M12 0A12 12 0 0 1 24 12Q23 20 12 32Q1 20 0 12A12 12 0 0 1 12 0ZM12 7A5 5 0 1 0 12 17A5 5 0 1 0 12 7Z" />
    </svg>
  );
}

function AndroidNav({ className, icon }: { className: string; icon: string }) {
  return (
    <div className={`relative w-full ${className}`}>
      <svg viewBox="0 0 1024 50" className={`absolute left-0 w-[1024px] ${icon}`} fill="none" stroke="#88898d" strokeWidth="4.500" strokeLinejoin="round">
        <path d="M193 2V48M213.500 2V48M234 2V48" />
        <rect x="489" y="3" width="47" height="44" rx="16" />
        <path d="M825 3L799 25L825 47" />
      </svg>
    </div>
  );
}

function PriceText({ plus, plusGap, digits, w }: { plus: number; plusGap: number; digits: string; w: number }) {
  return (
    <>
      {plus > 0 && (
        <span className="flex justify-center" style={{ width: plus, marginRight: plusGap }}>
          <Fit w={plus} className="text-[0.92em]">+</Fit>
        </span>
      )}
      <Fit w={w} className="[-webkit-text-stroke:2px_#1f2125]">{digits}</Fit>
    </>
  );
}

/* ---------- screens ---------- */

function PhoneOne() {
  return (
    <section className="relative flex h-[2309px] w-[1024px] flex-col overflow-hidden bg-white font-['Inter',sans-serif] [font-optical-sizing:none]">
      <div className="relative h-[1505px] shrink-0">
        <svg width="1024" height="1560" viewBox="0 0 1024 1560" className="absolute left-0 top-0">
          <CityMap />
          <path d="M462 190H508L488 236Q484.500 250 481 236Z" fill="#fff" />
          <Ring x={484.600} y={267.800} r={31} sw={9.500} c="#0f9de0" />
          <path d="M468 190H502L490 225L487 243H482L480 225Z" fill="#fff" />
        </svg>
        <div className="absolute inset-y-0 left-0 w-[130px] bg-gradient-to-r from-black/6 to-transparent" />
        <div className="absolute left-[282px] top-[103px] flex h-[92px] w-[404px] items-center rounded-full bg-white pl-[5px] text-[29px] font-semibold text-[#202125] shadow-[0_5px_16px_rgba(0,0,0,0.12)]">
          <span className="flex size-[83px] items-center justify-center rounded-full bg-[#0d9de0]">
            <StoreIcon className="h-[36px] w-[36px]" />
          </span>
          <Fit w={118} className="ml-[23px]">Təhvilal</Fit>
          <Fit w={83} className="ml-[60px]">3 dəq</Fit>
        </div>
        <svg viewBox="0 0 62 62" className="absolute left-[510px] top-[127px] size-[62px]">
          <Bike x={31} y={31} r={30.500} />
        </svg>
        <AppleStatus time="11:02" />
        <Burger className="left-[20px] top-[165px] size-[103px]" lines="h-[32px] w-[46px]" />
        <button className="absolute left-[810px] top-[165px] flex h-[103px] w-[194px] items-center justify-center rounded-[20px] bg-white text-[37px] font-semibold text-[#e5372c] shadow-[0_5px_16px_rgba(0,0,0,0.14)]">
          <Fit w={108}>İmtina</Fit>
        </button>
        <button className="absolute left-[4px] top-[1335px] flex size-[145px] items-center justify-center rounded-full bg-white shadow-[0_4px_14px_rgba(0,0,0,0.14)]">
          <svg viewBox="0 0 52 54" className="mr-[5px] h-[54px] w-[52px]" fill="none" stroke="#1896cf" strokeWidth="5" strokeLinejoin="round">
            <path d="M49 3L3 21.500L22 32L32.500 51Z" />
          </svg>
        </button>
      </div>
      <div className="relative flex grow flex-col rounded-t-[42px] bg-white">
        <div className="absolute inset-y-0 left-0 w-[130px] rounded-tl-[42px] bg-gradient-to-r from-black/4 to-transparent" />
        <div className="mx-auto mt-[20px] h-[11px] w-[123px] rounded-full bg-[#e3e3e4]" />
        <div className="mt-[48px] flex h-[90px] items-center pl-[42px] text-[74px] font-black text-[#1f2125]">
          <PriceText plus={41} plusGap={17} digits="1,10" w={140} />
          <Manat tall className="mb-[3px] ml-[19px] h-[59px] w-[41px]" />
        </div>
        <div className="mt-[18px] flex h-[50px] items-center pl-[42px] text-[35px] text-[#7a7a7c]">
          <Fit w={747}>Onu davam edən çatdırılmalarınıza əlavə edin</Fit>
        </div>
        <div className="mt-[26px] h-[2px] bg-[#e6e6e7]" />
        <div className="mt-[21px] flex h-[48px] items-center pl-[42px] text-[40px] font-semibold text-[#202125]">
          <Fit w={321}>Əlavə çatdırılma</Fit>
        </div>
        <div className="mt-[2px] flex h-[48px] items-center pl-[42px] text-[40px] font-semibold text-[#159bd8]">
          <Fit w={315}>Izmir Lahmacun</Fit>
        </div>
        <div className="mt-[36px] flex h-[40px] items-center pl-[42px] text-[31px] text-[#7a7a7c]">
          <Fit w={195}>Əlavə məsafə</Fit>
        </div>
        <div className="flex h-[92px] items-start border-b-2 border-[#e3e3e4] bg-gradient-to-b from-white to-[#efeff0] pl-[42px] pt-[16px] text-[40px] font-medium text-[#202125]">
          <span className="flex h-[48px] items-center"><Fit w={134}>0.4 km</Fit></span>
        </div>
        <div className="relative flex grow flex-col bg-[#fafafa] pt-[20px]">
          <div className="absolute left-[135px] top-[137px] flex h-[50px] items-center text-[34px] text-[#dedee0]">
            <Fit w={695}>Hüseyngulu Sarabski 104 C, AZ1065 Bakı</Fit>
          </div>
          <div className="absolute bottom-0 left-[76px] top-[170px] w-[2px] bg-[#ededed]" />
          <button className="relative mx-[20px] flex h-[144px] items-center justify-center rounded-[20px] bg-[#009de0] text-[39px] font-semibold text-white">
            <Fit w={367}>Marşrut əlavə edin</Fit>
          </button>
          <div className="mx-auto mt-[54px] h-[14px] w-[381px] rounded-full bg-black" />
        </div>
      </div>
    </section>
  );
}

function PhoneTwo() {
  return (
    <section className="relative flex h-[2309px] w-[1024px] flex-col overflow-hidden bg-white font-['Roboto',sans-serif]">
      <div className="relative h-[1168px] shrink-0">
        <GulfMap />
        <div className="absolute left-[563px] top-[571px] flex h-[114px] w-[271px] items-center rounded-full bg-white pl-[5px] text-[44px] font-bold text-[#202125] shadow-[0_6px_16px_rgba(0,0,0,0.13)]">
          <span className="flex size-[100px] items-center justify-center rounded-full bg-[#3f97d8]">
            <StoreIcon className="h-[43px] w-[43px]" />
          </span>
          <Fit w={101} className="ml-[28px]">Hazır</Fit>
        </div>
        <svg width="1024" height="1168" viewBox="0 0 1024 1168" className="absolute left-0 top-0">
          <Bike x={759.500} y={715} r={37.500} />
          <Ring x={698.800} y={777.500} r={37.500} sw={11.500} c="#4199d8" />
          <path d="M672 684H726L708 712L703 744H694L690 712Z" fill="#fff" />
        </svg>
        <div className="absolute left-[55px] top-[32px] flex h-[52px] items-center text-[36px] font-bold text-[#454548]">
          <Fit w={102}>10:56</Fit>
          <div className="ml-[15px] flex h-[52px] w-[159px] items-center rounded-full bg-[#66b466] pl-[20px] text-white">
            <svg viewBox="0 0 24 24" className="size-[29px]" fill="#fff">
              <path d="M3 2Q6 0 8 5Q9 8 6 9Q8 15 15 18Q17 14 20 16Q25 19 21 22Q17 25 9 19Q-1 10 3 2Z" />
            </svg>
            <Fit w={77} className="ml-[11px] text-[34px] font-semibold">01:28</Fit>
          </div>
          <svg viewBox="0 0 36 36" className="ml-[17px] size-[36px]" fill="none" stroke="#4b4b4e" strokeWidth="3">
            <path d="M2.500 33.500L4.500 25A15.500 15.500 0 1 1 11 31.500Z" strokeLinejoin="round" />
            <path d="M12 11Q14 8 16 13L14.500 16Q17 20 20.500 21.500L23 19.500Q28 21 25 24.500Q20 27 14.500 21Q9.500 15 12 11Z" fill="#4b4b4e" stroke="none" />
          </svg>
        </div>
        <div className="absolute left-[743px] top-[36px] flex h-[44px] items-center">
          <PlaceGlyph className="h-[31px] w-[23px]" />
          <div className="ml-[16px] flex w-[33px] flex-col items-center text-[17px] font-medium text-[#454548]">
            <Fit w={31}>4G+</Fit>
            <svg viewBox="0 0 22 16" className="h-[15px] w-[22px]" fill="none" stroke="#454548" strokeWidth="2.600">
              <path d="M6 0V13M1.500 9L6 14L10.500 9M16 16V3M11.500 7L16 2L20.500 7" />
            </svg>
          </div>
          <Bars thin c="#454548" className="ml-[12px] h-[28px] w-[27px]" />
          <Bars thin c="#454548" className="ml-[14px] h-[28px] w-[27px]" />
          <div className="relative ml-[15px] flex h-[42px] w-[62px] items-center justify-center overflow-hidden rounded-full bg-[#a3a3a5] text-[31px] font-bold text-white">
            <div className="absolute inset-y-0 left-0 w-[51px] bg-[#454548]" />
            <Fit w={36} className="relative">83</Fit>
          </div>
        </div>
        <Burger className="left-[31px] top-[145px] size-[126px]" lines="h-[39px] w-[56px]" />
        <button className="absolute left-[746px] top-[142px] flex h-[132px] w-[250px] items-center justify-center rounded-[24px] bg-white text-[52px] font-bold text-[#e04a30] shadow-[0_5px_18px_rgba(0,0,0,0.18)]">
          <Fit w={145}>İmtina</Fit>
        </button>
      </div>
      <div className="relative flex grow flex-col rounded-t-[48px] bg-white">
        <div className="mx-auto mt-[25px] h-[11px] w-[151px] rounded-full bg-[#e3e4e5]" />
        <div className="mt-[59px] flex h-[110px] items-center pl-[57px] font-['Inter',sans-serif] text-[93px] font-black text-[#1f2125] [font-optical-sizing:none]">
          <PriceText plus={49} plusGap={21} digits="1,10" w={172} />
          <Manat className="ml-[24px] mt-[13px] h-[55px] w-[63px]" />
        </div>
        <div className="mt-[24px] flex h-[67px] items-center pl-[57px] text-[52.500px] text-[#7c7d80]">
          <Fit w={798}>Onu davam edən çatdırılmalarınıza</Fit>
        </div>
        <div className="flex h-[67px] items-center pl-[57px] text-[52.500px] text-[#7c7d80]">
          <Fit w={230}>əlavə edin</Fit>
        </div>
        <div className="mt-[31px] h-[2px] bg-[#e5e8ea]" />
        <div className="mt-[26px] flex h-[66px] items-center pl-[57px] text-[55px] font-semibold text-[#202125]">
          <Fit w={413}>Əlavə çatdırılma</Fit>
        </div>
        <div className="flex h-[66px] items-center pl-[57px] text-[55px] font-bold text-[#459bdb]">
          <Fit w={342}>Molto Market</Fit>
        </div>
        <div className="mt-[45px] flex h-[50px] items-center pl-[57px] text-[43px] text-[#7c7d80]">
          <Fit w={260}>Əlavə məsafə</Fit>
        </div>
        <div className="mt-[24px] flex h-[60px] items-center pl-[57px] text-[56px] font-semibold text-[#202125]">
          <Fit w={171}>2.1 km</Fit>
        </div>
        <div className="mt-[22px] h-[12px] bg-[#f7f7f8]" />
        <div className="relative flex grow flex-col overflow-hidden bg-[#fdfdfd] pt-[22px]">
          <div className="absolute left-[171px] top-[182px] flex h-[60px] items-center text-[50px] text-[#d9d9db]">
            <Fit w={631}>cafe love city, AZ1095 Bakı</Fit>
          </div>
          <button className="relative mx-[29px] flex h-[177px] shrink-0 items-center justify-center rounded-[24px] bg-[#459bdb] text-[56px] font-bold text-white">
            <Fit w={472}>Marşrut əlavə edin</Fit>
          </button>
          <AndroidNav className="mt-[23px] h-[151px] bg-[#f0f0f3]" icon="top-[49px] h-[50px]" />
        </div>
      </div>
    </section>
  );
}

function PhoneThree() {
  return (
    <section className="relative flex h-[2309px] w-[1024px] flex-col overflow-hidden bg-white font-['Roboto',sans-serif]">
      <div className="relative h-[1383px] shrink-0">
        <AvenueMap />
        <div className="absolute left-[510px] top-[319px] flex h-[100px] w-[202px] items-center rounded-full bg-white pl-[5px] text-[36px] font-bold text-[#202125] shadow-[0_5px_14px_rgba(0,0,0,0.13)]">
          <span className="flex size-[88px] items-center justify-center rounded-full bg-[#0d9de0]">
            <StoreIcon className="h-[38px] w-[38px]" />
          </span>
          <Fit w={54} className="ml-[23px]">indi</Fit>
        </div>
        <svg width="1024" height="1383" viewBox="0 0 1024 1383" className="absolute left-0 top-0">
          <Ring x={611.300} y={502} r={32.500} sw={9.500} c="#0f9de0" />
          <path d="M592 418H626L617 440L613 469H610L604 440Z" fill="#fff" />
          <Bike x={643.300} y={571} r={33} />
        </svg>
        <div className="absolute left-[46px] top-[32px] flex h-[46px] items-center text-[38.500px] text-[#464649]">
          <Fit w={97}>10:48</Fit>
          <svg viewBox="0 0 24 38" className="ml-[20px] h-[42px] w-[24px]" fill="none" stroke="#3c3c3e" strokeWidth="5">
            <path d="M12 3V19M6 16L12 24L18 16Z" />
            <path d="M2 36H22" stroke="#d0d0d2" strokeWidth="2" />
          </svg>
          <svg viewBox="0 0 40 38" className="ml-[15px] h-[40px] w-[38px]" fill="#fff" stroke="#3c3c3e" strokeWidth="2.200">
            <path d="M4 26Q9 24 8 15Q11 2 23 2Q37 4 37 17Q36 31 22 32H12Q6 30 4 26Z" />
            <circle cx="13" cy="33" r="3.500" fill="#3c3c3e" />
            <circle cx="28" cy="33" r="3.500" fill="#3c3c3e" />
            <path d="M16 19Q22 27 30 19" fill="none" />
            <circle cx="18" cy="12" r="1.500" fill="#3c3c3e" />
            <circle cx="28" cy="12" r="1.500" fill="#3c3c3e" />
          </svg>
          <div className="ml-[9px] flex h-[37px] w-[37px] items-center justify-center rounded-[12px] bg-[#17181b] font-['Lato',sans-serif] text-[14px] font-black italic text-white">
            <Fit w={27}>Wolt</Fit>
          </div>
          <div className="ml-[24px] size-[11px] rounded-full bg-[#3c3c3e]" />
        </div>
        <div className="absolute left-[577px] top-[32px] flex h-[46px] items-center">
          <svg viewBox="0 0 22 30" className="h-[31px] w-[23px]" fill="#3f3f42">
            <path d="M7 0H15V4H22V30H0V4H7Z" />
            <path d="M6 15L10 20L17 11" fill="none" stroke="#fff" strokeWidth="2.500" />
          </svg>
          <svg viewBox="0 0 30 30" className="ml-[16px] size-[30px]" fill="#3f3f42">
            <circle cx="15" cy="16" r="12" />
            <path d="M1 8L8 1M29 8L22 1M6 26L3 30M24 26L27 30" stroke="#3f3f42" strokeWidth="3" />
            <path d="M15 9V17L20 19" fill="none" stroke="#fff" strokeWidth="2.500" />
          </svg>
          <svg viewBox="0 0 24 30" className="ml-[16px] h-[31px] w-[24px]" fill="none" stroke="#3f3f42" strokeWidth="2.800">
            <path d="M3 8L20 22L12 29V1L20 8L3 22" />
          </svg>
          <PlaceGlyph className="ml-[18px] h-[31px] w-[23px]" />
          <div className="ml-[18px] flex w-[33px] flex-col items-center text-[17px] font-medium text-[#454548]">
            <Fit w={29}>4G+</Fit>
            <svg viewBox="0 0 22 16" className="h-[15px] w-[22px]" fill="none" stroke="#454548" strokeWidth="2.600">
              <path d="M6 0V13M1.500 9L6 14L10.500 9M16 16V3M11.500 7L16 2L20.500 7" />
            </svg>
          </div>
          <Bars thin c="#454548" className="ml-[12px] h-[29px] w-[27px]" />
          <Bars thin c="#454548" className="ml-[14px] h-[29px] w-[27px]" />
          <Fit w={79} className="ml-[16px] text-[38.500px] text-[#464649]">42%</Fit>
          <svg viewBox="0 0 22 30" className="ml-[8px] h-[31px] w-[21px]" fill="#b5b5b8">
            <path d="M7 0H15V4H22V30H0V4H7Z" />
            <path d="M0 18H22V30H0Z" fill="#3f3f42" />
            <path d="M12 8L6 17H11L9 25L16 15H11Z" fill="#fff" />
          </svg>
        </div>
        <Burger className="left-[25px] top-[133px] size-[112px]" lines="h-[34px] w-[49px]" />
        <button className="absolute left-[799px] top-[133px] flex h-[111px] w-[202px] items-center justify-center rounded-[20px] bg-white pt-[7px] text-[40px] font-bold text-[#e5372c] shadow-[0_5px_14px_rgba(0,0,0,0.13)]">
          <Fit w={111}>İmtina</Fit>
        </button>
      </div>
      <div className="relative flex grow flex-col rounded-t-[42px] bg-white">
        <div className="mx-auto mt-[23px] h-[10px] w-[132px] rounded-full bg-[#e3e3e4]" />
        <div className="mt-[51px] flex h-[100px] items-center pl-[48px] font-['Inter',sans-serif] text-[80px] font-black text-[#1f2125] [font-optical-sizing:none]">
          <PriceText plus={0} plusGap={0} digits="1,24" w={164} />
          <Manat className="ml-[19px] mt-[11px] h-[47px] w-[55px]" />
        </div>
        <div className="mt-[17px] flex h-[60px] items-center pl-[48px] text-[41.500px] text-[#7a7b7d]">
          <Fit w={730}>Tam çatdırılma üçün gözlənilən qazanclar</Fit>
        </div>
        <div className="mt-[23px] h-[2px] bg-[#e6e6e7]" />
        <div className="mt-[21px] flex h-[54px] items-center pl-[48px] text-[43.500px] font-semibold text-[#202125]">
          <Fit w={203}>Çatdırılma</Fit>
        </div>
        <div className="flex h-[54px] items-center pl-[48px] text-[43.500px] font-semibold text-[#1398d0]">
          <Fit w={526}>Rossmann Ayna Sultanova</Fit>
        </div>
        <div className="mt-[38px] flex h-[46px] items-center pl-[48px] text-[34px] text-[#7a7b7d]">
          <Fit w={264}>Marşrut məsafəsi</Fit>
        </div>
        <div className="mt-[16px] flex h-[54px] items-center pl-[48px] text-[44px] font-semibold text-[#202125]">
          <Fit w={134}>1.5 km</Fit>
        </div>
        <div className="mt-[15px] h-[8px] bg-[#f8f8f9]" />
        <div className="relative flex grow flex-col overflow-hidden bg-[#fdfdfd] pt-[20px]">
          <div className="absolute left-[150px] top-[156px] flex h-[50px] items-center text-[39px] text-[#d9d9db]">
            <Fit w={540}>CR6W7G32 Baky, AZ1000 Bakı</Fit>
          </div>
          <button className="relative ml-[22px] mr-[19px] flex h-[160px] shrink-0 items-center justify-center rounded-[22px] bg-[#049ce1] pt-[1px] text-[42.500px] font-bold text-white">
            <Fit w={250}>Qəbul etmək</Fit>
          </button>
          <AndroidNav className="mt-[19px] h-[134px] bg-[#f4f5f7]" icon="top-[45px] h-[50px] -translate-x-[5px]" />
        </div>
      </div>
    </section>
  );
}

/* ---------- chat ---------- */

function Ticks({ className }: { className: string }) {
  return (
    <svg viewBox="0 0 30 21" className={className} fill="none" stroke="#20c215" strokeWidth="3" strokeLinecap="round" strokeLinejoin="round">
      <path d="M1.500 12L8 19L21 2M15.500 19.500L28.500 2" />
    </svg>
  );
}

function Sent({ box, w, time, children }: { box: string; w: number; time: string; children: string }) {
  return (
    <div className={`ml-auto mr-[20px] flex h-[91px] items-center rounded-[20px] bg-[#dff1f9] ${box}`}>
      <Fit w={w} className="ml-[22px] text-[38.500px] font-[430] text-[#202125]">{children}</Fit>
      <Fit w={73} className="ml-auto mt-[7px] text-[30px] text-[#202125]">{time}</Fit>
      <Ticks className="ml-[10px] mr-[21px] mt-[7px] h-[21px] w-[30px]" />
    </div>
  );
}

function Smile() {
  return (
    <svg viewBox="0 0 48 48" className="ml-[16px] size-[49px]">
      <defs>
        <linearGradient id="smile" x1="0" y1="0" x2="0" y2="1">
          <stop offset="0" stopColor="#ffe14d" />
          <stop offset="1" stopColor="#fba41b" />
        </linearGradient>
      </defs>
      <circle cx="24" cy="24" r="23.500" fill="url(#smile)" />
      <ellipse cx="9" cy="28" rx="6" ry="4.500" fill="#ff8a3c" opacity="0.55" />
      <ellipse cx="39" cy="28" rx="6" ry="4.500" fill="#ff8a3c" opacity="0.55" />
      <g fill="none" stroke="#6b3a0a" strokeWidth="2.800" strokeLinecap="round">
        <path d="M11.500 22Q15 14 19 22" />
        <path d="M29 22Q33 14 36.500 22" />
        <path d="M14 31Q24 42 34 31" />
      </g>
    </svg>
  );
}

function Heart() {
  return (
    <svg viewBox="0 0 50 47" className="ml-[16px] h-[48px] w-[50px]">
      <defs>
        <linearGradient id="heart" x1="0" y1="0" x2="0" y2="1">
          <stop offset="0" stopColor="#3ea0ff" />
          <stop offset="0.5" stopColor="#0d6bfb" />
          <stop offset="1" stopColor="#0b4fe0" />
        </linearGradient>
      </defs>
      <path d="M25 47Q8 34 3 23Q-2 10 7 3Q18 -3 25 9Q32 -3 43 3Q52 10 47 23Q42 34 25 47Z" fill="url(#heart)" />
    </svg>
  );
}

function Hands() {
  return (
    <svg viewBox="0 0 52 52" className="ml-[14px] mr-[17px] h-[52px] w-[52px]">
      <defs>
        <linearGradient id="hands" x1="0" y1="0" x2="0" y2="1">
          <stop offset="0" stopColor="#ffcf3f" />
          <stop offset="1" stopColor="#fbb01f" />
        </linearGradient>
      </defs>
      <path d="M0 44L10 39L20 51H0ZM52 44L42 39L32 51H52Z" fill="#3f82d8" />
      <path d="M25.500 0Q21 1 20.500 10L16 28L9 40L17 50L25.500 43Z" fill="url(#hands)" />
      <path d="M26.500 0Q31 1 31.500 10L36 28L43 40L35 50L26.500 43Z" fill="url(#hands)" />
      <path d="M26 2V44M21 30L18 42M31 30L34 42" stroke="#c67a10" strokeWidth="1.400" fill="none" />
    </svg>
  );
}

function Line({ children }: { children?: ReactNode }) {
  return <div className="flex h-[49.4px] items-center">{children}</div>;
}

function PhoneFour() {
  const body = "text-[38.500px] font-[430]";
  return (
    <section className="relative flex h-[2309px] w-[1024px] flex-col overflow-hidden bg-white font-['Inter',sans-serif] text-[#202125] [font-optical-sizing:none]">
      <AppleStatus time="11:06" charging />
      <header className="flex h-[270px] shrink-0 items-end justify-between border-b-[3px] border-[#cfcfd1] px-[20px] pb-[20px]">
        <button className="flex size-[103px] items-center justify-center rounded-full bg-[#ebebeb]">
          <svg viewBox="0 0 51 36" className="h-[36px] w-[51px]" fill="none" stroke="#1d1e20" strokeWidth="6" strokeLinecap="round" strokeLinejoin="round">
            <path d="M48 18H4M19 3L4 18L19 33" />
          </svg>
        </button>
        <div className="flex h-[103px] items-center text-[38.500px] font-bold">
          <Fit w={103}>Nigar</Fit>
        </div>
        <button className="flex size-[103px] items-center justify-center rounded-full bg-[#ebebeb]">
          <svg viewBox="0 0 44 44" className="size-[44px]" stroke="#1d1e20" strokeWidth="6" strokeLinecap="round">
            <path d="M3 3L41 41M41 3L3 41" />
          </svg>
        </button>
      </header>

      <div className="relative ml-[103px] h-[687px] w-[901px] shrink-0 overflow-hidden rounded-b-[16px]">
        <svg width="901" height="600" viewBox="0 0 901 600" className="absolute left-0 top-0 blur-[2.500px]">
          <g transform="translate(18.300 -735.700) scale(0.842)">
            <CityMap />
          </g>
        </svg>
        <div className="absolute left-[22px] top-[418px] flex size-[122px] items-center justify-center rounded-full bg-white shadow-[0_3px_12px_rgba(0,0,0,0.14)]">
          <svg viewBox="0 0 52 54" className="h-[46px] w-[44px] blur-[1px]" fill="none" stroke="#27a3d8" strokeWidth="6" strokeLinejoin="round">
            <path d="M49 3L3 21.500L22 32L32.500 51Z" />
          </svg>
        </div>
        <div className="absolute inset-x-0 bottom-0 flex h-[155px] flex-col rounded-t-[36px] bg-white">
          <div className="mx-auto mt-[17px] h-[9px] w-[104px] rounded-full bg-[#e1e1e2] blur-[1px]" />
          <div className="mt-[43px] flex h-[74px] items-center pl-[52px] text-[62px] font-black text-[#1f2125] blur-[1.500px]">
            <PriceText plus={35} plusGap={15} digits="1,10" w={118} />
            <Manat tall className="mb-[4px] ml-[16px] h-[50px] w-[36px]" />
          </div>
        </div>
        <div className="absolute inset-y-0 left-0 w-[120px] bg-gradient-to-r from-black/8 to-transparent" />
        <div className="absolute bottom-[20px] right-[21px] flex h-[58px] w-[145px] items-center rounded-[14px] bg-[#616366] pl-[17px] text-[30px] text-white">
          <Fit w={73}>11:02</Fit>
          <Ticks className="ml-[9px] h-[21px] w-[30px]" />
        </div>
      </div>

      <main className="flex flex-col pt-[31px]">
        <Sent box="w-[484px]" w={311} time="11:02">Bu nə qiymətdi ?</Sent>
        <div className={`relative ml-[144px] mt-[32px] h-[386px] w-[806px] rounded-[20px] bg-[#f5f5f5] pl-[22px] pt-[19px] ${body}`}>
          <Line><Fit w={126}>Salam!</Fit></Line>
          <Line />
          <Line><Fit w={580}>Sorğunuz üçün təşəkkür edirik</Fit><Smile /></Line>
          <Line />
          <Line><Fit w={665}>Müraciətinizi nəzərdən keçirdikdən</Fit></Line>
          <Line><Fit w={658}>sonra, mümkün qədər tez sizə geri</Fit></Line>
          <Line><Fit w={299}>dönüş edəcəyik</Fit><Heart /></Line>
          <Fit w={74} className="absolute bottom-[26px] right-[22px] text-[30px] font-normal">11:03</Fit>
        </div>
        <div className="mt-[31px] flex items-end">
          <div className="ml-[20px] flex size-[93px] items-center justify-center rounded-full bg-[#ebebeb] text-[24px] text-[#77787a]">N</div>
          <div className={`relative ml-[31px] h-[287px] w-[800px] rounded-[20px] bg-[#f5f5f5] pl-[22px] pt-[19px] ${body}`}>
            <Line><Fit w={615}>Anlayıram lakin qiymətlər sistem</Fit></Line>
            <Line><Fit w={641}>tərəfindən icra olur, biz qiymətləri</Fit></Line>
            <Line><Fit w={211}>icra etmirik</Fit><Hands /><Fit w={299}>Tələbat və hava</Fit></Line>
            <Line><Fit w={658}>şəraitindən aslı olaraq sistem təyin</Fit></Line>
            <Line><Fit w={285}>edir qiymətləri.</Fit></Line>
            <Fit w={75} className="absolute bottom-[26px] right-[21px] text-[30px] font-normal">11:04</Fit>
          </div>
        </div>
        <div className="mt-[21px] flex flex-col gap-[31px]">
          <Sent box="w-[309px]" w={137} time="11:04">Bildime</Sent>
          <Sent box="w-[535px]" w={365} time="11:04">Hanıs bəs 1.50 tarif</Sent>
        </div>
      </main>

      <footer className="absolute inset-x-0 bottom-0 flex h-[234px] flex-col border-t-[3px] border-[#d3d3d5] bg-white pt-[19px]">
        <div className="flex items-center">
          <button className="flex size-[103px] items-center justify-center rounded-full bg-[#ebebeb]">
            <svg viewBox="0 0 51 51" className="size-[51px]" stroke="#1d1e20" strokeWidth="6.500" strokeLinecap="round">
              <path d="M3.500 25.500H47.500M25.500 3.500V47.500" />
            </svg>
          </button>
          <div className="ml-[20px] h-[103px] grow rounded-full bg-[#ebebeb]" />
        </div>
        <div className="mx-auto mt-[75px] h-[14px] w-[381px] rounded-full bg-black" />
      </footer>
    </section>
  );
}

export default function App() {
  return (
    <div className="grid h-[2309px] w-[4096px] grid-cols-[repeat(4,1024px)] overflow-hidden bg-white">
      <PhoneOne />
      <PhoneTwo />
      <PhoneThree />
      <PhoneFour />
    </div>
  );
}
